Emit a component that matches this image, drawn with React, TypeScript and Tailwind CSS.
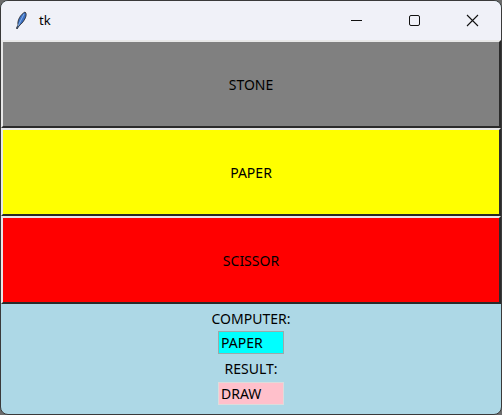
import React from "react";

const font = { fontFamily: '"Noto Sans", "Open Sans", sans-serif' };

function Btn({ bg, label }: { bg: string; label: string }) {
  return (
    <div className={`h-[88px] w-full border-2 border-t-[#e8e8e8] border-l-[#e8e8e8] border-b-[#2a2a2a] border-r-[#2a2a2a] ${bg} flex items-center justify-center text-[14px] text-black`}>
      {label}
    </div>
  );
}

export default function App() {
  return (
    <div className="w-[502px] h-[415px] bg-[#6b6b6b]" style={font}>
      <div className="w-[502px] h-[415px] rounded-[8px] overflow-hidden border border-[#3a3a3a] flex flex-col bg-[#add8e6]">
        <div className="h-[39px] bg-[#f0f1f8] flex items-center shrink-0">
          <svg width="16" height="20" viewBox="0 0 16 20" className="ml-[12px]">
            <path d="M12 1 C15 3 12 10 6 15 L4 18 L3.5 17 L5 14 C4 9 8 3 12 1 Z" fill="#3b6fc4" stroke="#222" strokeWidth="0.8" />
            <path d="M11 3 L5 15" stroke="#9cc4f0" strokeWidth="0.8" />
          </svg>
          <span className="ml-[10px] text-[13px] text-black" style={{ fontFamily: '"Noto Sans", sans-serif' }}>tk</span>
          <div className="flex-1" />
          <div className="w-[58px] h-[39px] flex items-center justify-center">
            <div className="w-[11px] h-[1px] bg-[#111]" />
          </div>
          <div className="w-[58px] h-[39px] flex items-center justify-center">
            <div className="w-[11px] h-[11px] border border-[#111] rounded-[2px]" />
          </div>
          <div className="w-[58px] h-[39px] flex items-center justify-center">
            <svg width="13" height="13" viewBox="0 0 13 13">
              <path d="M1 1 L12 12 M12 1 L1 12" stroke="#111" strokeWidth="1.1" />
            </svg>
          </div>
        </div>
        <Btn bg="bg-[#808080]" label="STONE" />
        <Btn bg="bg-[#ffff00]" label="PAPER" />
        <Btn bg="bg-[#ff0000]" label="SCISSOR" />
        <div className="flex-1 flex flex-col items-center pt-[4px] text-[14px] text-black">
          <div className="h-[21px] leading-[21px]">COMPUTER:</div>
          <div className="mt-[2px] w-[66px] h-[23px] bg-[#00ffff] border border-[#9aa] pl-[2px] leading-[21px]">PAPER</div>
          <div className="mt-[4px] h-[22px] leading-[22px]">RESULT:</div>
          <div className="mt-[2px] w-[66px] h-[23px] bg-[#ffc0cb] border border-[#dcdcdc] pl-[2px] leading-[21px]">DRAW</div>
        </div>
      </div>
    </div>
  );
}
